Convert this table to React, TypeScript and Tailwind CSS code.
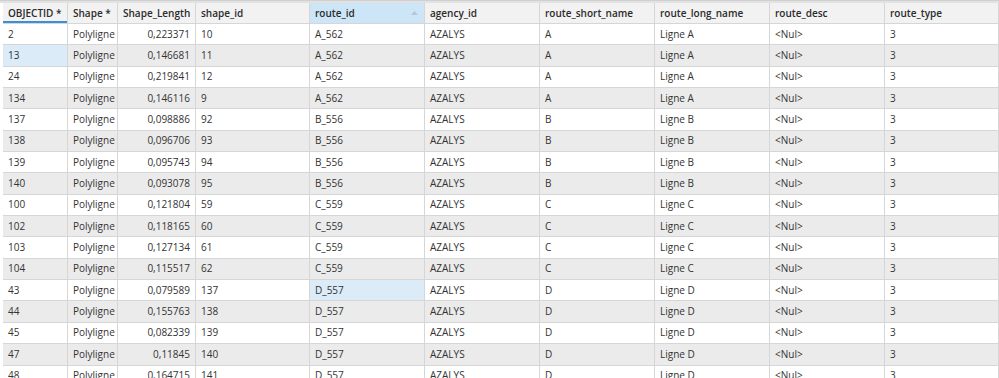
import type { ReactNode } from "react";

type Row = [string, string, string];

const groups: { route: string; short: string; rows: Row[] }[] = [
  {
    route: "A_562",
    short: "A",
    rows: [
      ["2", "0,223371", "10"],
      ["13", "0,146681", "11"],
      ["24", "0,219841", "12"],
      ["134", "0,146116", "9"],
    ],
  },
  {
    route: "B_556",
    short: "B",
    rows: [
      ["137", "0,098886", "92"],
      ["138", "0,096706", "93"],
      ["139", "0,095743", "94"],
      ["140", "0,093078", "95"],
    ],
  },
  {
    route: "C_559",
    short: "C",
    rows: [
      ["100", "0,121804", "59"],
      ["102", "0,118165", "60"],
      ["103", "0,127134", "61"],
      ["104", "0,115517", "62"],
    ],
  },
  {
    route: "D_557",
    short: "D",
    rows: [
      ["43", "0,079589", "137"],
      ["44", "0,155763", "138"],
      ["45", "0,082339", "139"],
      ["47", "0,11845", "140"],
      ["48", "0,164715", "141"],
    ],
  },
];

const widths = [
  "w-[65px]",
  "w-[50px]",
  "w-[78px]",
  "w-[114px]",
  "w-[115px]",
  "w-[115px]",
  "w-[115px]",
  "w-[115px]",
  "w-[115px]",
  "w-[114px]",
];

const headers = [
  "OBJECTID *",
  "Shape *",
  "Shape_Length",
  "shape_id",
  "route_id",
  "agency_id",
  "route_short_name",
  "route_long_name",
  "route_desc",
  "route_type",
];

function Cell({
  i,
  children,
  right,
  selected,
}: {
  i: number;
  children: ReactNode;
  right?: boolean;
  selected?: boolean;
}) {
  return (
    <div
      className={`${widths[i]} shrink-0 h-full border-r border-[#d6d6d6] flex items-center px-[5px] whitespace-nowrap overflow-hidden ${
        right ? "justify-end" : ""
      } ${selected ? "bg-[#dcebf8]" : ""}`}
    >
      {children}
    </div>
  );
}

export default function App() {
  const flat = groups.flatMap((g) => g.rows.map((r) => ({ ...g, r })));

  return (
    <div
      className="w-[999px] h-[378px] overflow-hidden bg-white text-[10px] text-[#333]"
      style={{ fontFamily: '"Open Sans", "Noto Sans", sans-serif' }}
    >
      <div className="h-[3px] bg-[#e2e2e2] border-t border-[#d0d0d0]" />
      <div className="pl-[3px]">
        {/* header */}
        <div className="flex h-[21px] bg-[#f2f2f2] border-b border-[#d6d6d6] font-semibold text-[#2b2b2b]">
          {headers.map((h, i) => (
            <div
              key={h}
              className={`${widths[i]} shrink-0 h-full border-r border-[#d6d6d6] flex items-center px-[5px] relative whitespace-nowrap ${
                i === 4 ? "bg-[#cde6f7]" : ""
              }`}
            >
              {h}
              {i === 0 && (
                <div className="absolute left-0 right-0 bottom-0 h-[2px] bg-[#3c8fd6]" />
              )}
              {i === 4 && (
                <svg
                  className="absolute right-[6px] top-[8px]"
                  width="7"
                  height="4"
                  viewBox="0 0 7 4"
                >
                  <path d="M0 4 L3.5 0 L7 4 Z" fill="#b9c6d1" />
                </svg>
              )}
            </div>
          ))}
        </div>

        {/* rows */}
        {flat.map((row, n) => {
          const [oid, len, sid] = row.r;
          return (
            <div
              key={oid}
              className={`flex h-[21.35px] border-b border-[#d6d6d6] ${
                n % 2 === 0 ? "bg-white" : "bg-[#ebebeb]"
              }`}
            >
              <Cell i={0} selected={oid === "13"}>{oid}</Cell>
              <Cell i={1}>Polyligne</Cell>
              <Cell i={2} right>
                {len}
              </Cell>
              <Cell i={3}>{sid}</Cell>
              <Cell i={4} selected={oid === "43"}>{row.route}</Cell>
              <Cell i={5}>AZALYS</Cell>
              <Cell i={6}>{row.short}</Cell>
              <Cell i={7}>Ligne {row.short}</Cell>
              <Cell i={8}>&lt;Nul&gt;</Cell>
              <Cell i={9}>3</Cell>
            </div>
          );
        })}
      </div>
    </div>
  );
}
